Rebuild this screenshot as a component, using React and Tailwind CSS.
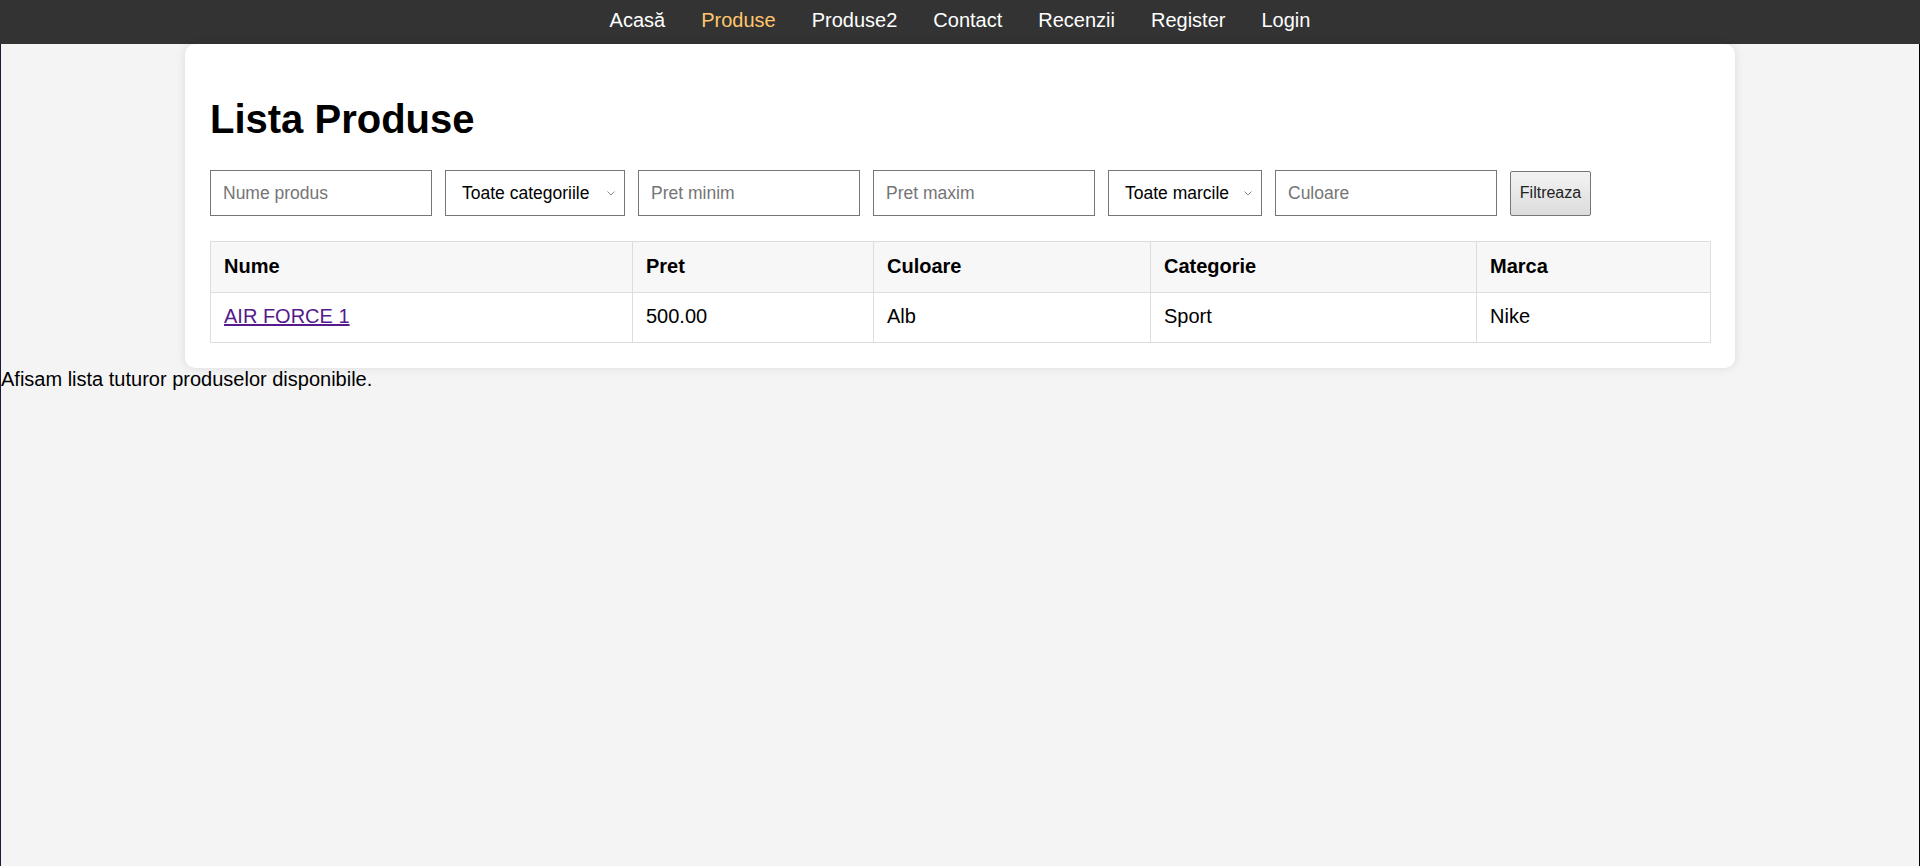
import React from 'react';

const links = ['Acasă', 'Produse', 'Produse2', 'Contact', 'Recenzii', 'Register', 'Login'];

const columns = [
    { label: 'Nume', width: 'w-[422px]' },
    { label: 'Pret', width: 'w-[241px]' },
    { label: 'Culoare', width: 'w-[277px]' },
    { label: 'Categorie', width: 'w-[326px]' },
    { label: 'Marca', width: 'w-[234px]' },
];

const inputCls =
    'w-[222px] h-[46px] border border-[#767676] bg-white px-[12px] text-[17.5px] text-black placeholder:text-[#757575] outline-none';

const Select = ({ label, width }) => (
    <span className={'relative inline-block ' + width}>
        <select
            className="appearance-none w-full h-[46px] border border-[#767676] bg-white pl-[16px] pr-[24px] text-[17.5px] text-black outline-none"
            defaultValue=""
        >
            <option value="">{label}</option>
        </select>
        {/* small chevron like the native one */}
        <svg
            className="pointer-events-none absolute right-[10px] top-[21px]"
            width="8"
            height="5"
            viewBox="0 0 8 5"
            fill="none"
        >
            <path d="M0.5 0.5L4 4L7.5 0.5" stroke="#8a8a8a" strokeWidth="1" />
        </svg>
    </span>
);

export default function App() {
    return (
        <div className="h-[866px] overflow-hidden flex flex-col bg-[#f4f4f4] font-['Liberation_Sans',Arial,sans-serif] text-black">
            {/* Top navigation */}
            <nav className="h-[44px] shrink-0 bg-[#333333] flex justify-center pt-[9px]">
                <ul className="flex gap-[36px]">
                    {links.map((l) => (
                        <li key={l}>
                            <a
                                href="#"
                                className={
                                    l === 'Produse'
                                        ? 'text-[20px] leading-[23px] text-[#ffc66d]'
                                        : 'text-[20px] leading-[23px] text-white'
                                }
                            >
                                {l}
                            </a>
                        </li>
                    ))}
                </ul>
            </nav>

            <div className="flex-1 border-l border-r border-l-[#1a1a3a] border-r-black">
                {/* Card */}
                <div className="w-[1550px] mx-auto bg-white rounded-[10px] shadow-[0_0_10px_rgba(0,0,0,0.1)] p-[25px]">
                    <h1 className="mt-[27px] mb-[28px] text-[40px] leading-[46px] font-bold">Lista Produse</h1>

                    {/* Filters */}
                    <form className="flex items-center gap-[13px]" onSubmit={(e) => e.preventDefault()}>
                        <input className={inputCls} placeholder="Nume produs" />
                        <Select label="Toate categoriile" width="w-[180px]" />
                        <input className={inputCls} placeholder="Pret minim" />
                        <input className={inputCls} placeholder="Pret maxim" />
                        <Select label="Toate marcile" width="w-[154px]" />
                        <input className={inputCls} placeholder="Culoare" />
                        <button
                            type="submit"
                            className="w-[81px] h-[45px] border border-[#767676] rounded-[2px] bg-gradient-to-b from-[#f3f3f3] to-[#dcdcdc] text-[16px] text-[#222]"
                        >
                            Filtreaza
                        </button>
                    </form>

                    {/* Products table */}
                    <table className="mt-[25px] w-[1500px] table-fixed border-collapse text-[20px] leading-[23px]">
                        <thead>
                            <tr className="bg-[#f7f7f7]">
                                {columns.map((c) => (
                                    <th
                                        key={c.label}
                                        className={c.width + ' border border-[#dddddd] px-[13px] pt-[13px] pb-[14px] text-left font-bold'}
                                    >
                                        {c.label}
                                    </th>
                                ))}
                            </tr>
                        </thead>
                        <tbody>
                            <tr>
                                <td className="border border-[#dddddd] px-[13px] pt-[12px] pb-[14px]">
                                    <a href="#" className="text-[#551a8b] underline">AIR FORCE 1</a>
                                </td>
                                <td className="border border-[#dddddd] px-[13px] pt-[12px] pb-[14px]">500.00</td>
                                <td className="border border-[#dddddd] px-[13px] pt-[12px] pb-[14px]">Alb</td>
                                <td className="border border-[#dddddd] px-[13px] pt-[12px] pb-[14px]">Sport</td>
                                <td className="border border-[#dddddd] px-[13px] pt-[12px] pb-[14px]">Nike</td>
                            </tr>
                        </tbody>
                    </table>
                </div>

                <p className="text-[20px] leading-[23px]">Afisam lista tuturor produselor disponibile.</p>
            </div>
        </div>
    );
}
